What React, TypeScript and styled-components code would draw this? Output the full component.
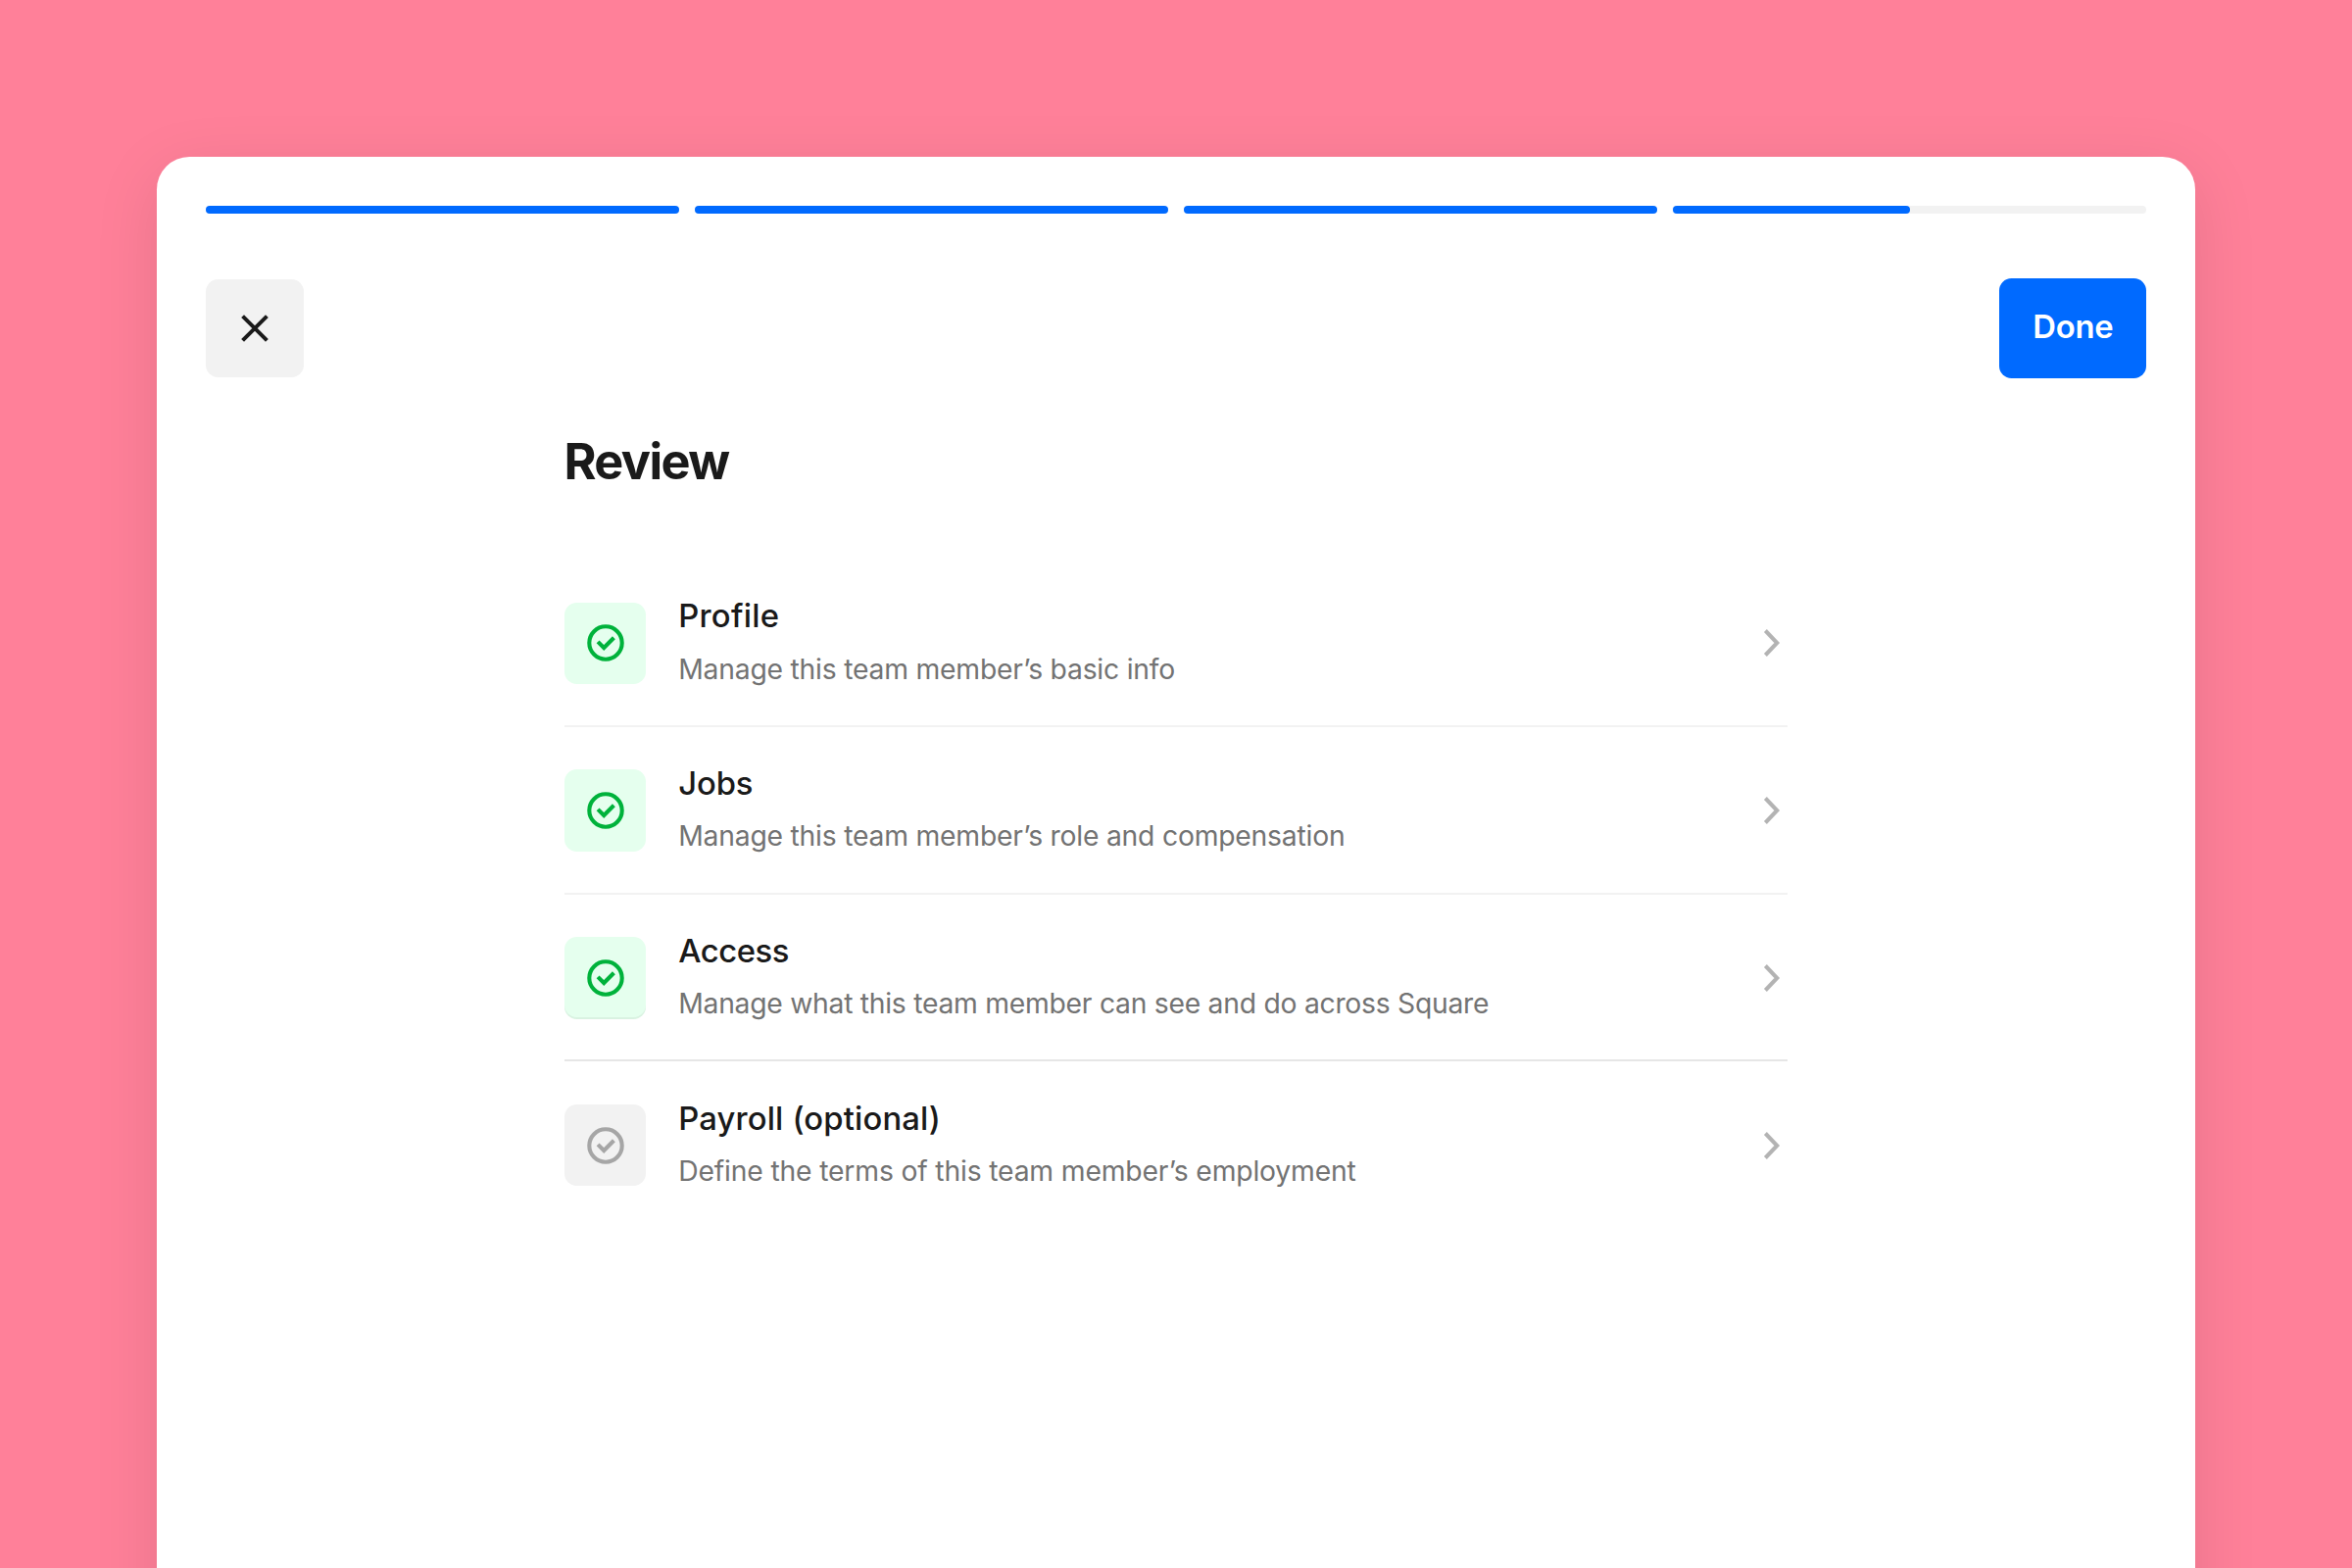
import React from "react";
import styled, { createGlobalStyle } from "styled-components";

const GlobalStyle = createGlobalStyle`
  *, *::before, *::after { box-sizing: border-box; }
  html, body { margin: 0; padding: 0; }
  body {
    background: #ff8099;
    font-family: Inter, "Liberation Sans", sans-serif;
    color: #1a1a1a;
    -webkit-font-smoothing: antialiased;
  }
  button { font: inherit; color: inherit; border: 0; padding: 0; cursor: pointer; }
`;

const Page = styled.div`
  width: 2400px;
  height: 1600px;
  padding: 160px 160px 0;
  overflow: hidden;
  background: #ff8099;
`;

const Sheet = styled.main`
  height: 1600px;
  padding: 50px 50px 0;
  background: #ffffff;
  border-radius: 33.33px;
  box-shadow: 0 16.67px 66.67px rgba(0, 0, 0, 0.1);
`;

const Progress = styled.div`
  display: grid;
  grid-template-columns: repeat(4, 1fr);
  gap: 16.67px;
`;

const Track = styled.div`
  height: 8.33px;
  border-radius: 4.17px;
  background: #f2f2f2;
`;

const Fill = styled.div<{ $amount: number }>`
  width: ${(p) => p.$amount * 100}%;
  height: 100%;
  border-radius: inherit;
  background: #006aff;
`;

const Toolbar = styled.header`
  display: flex;
  align-items: center;
  justify-content: space-between;
  margin-top: 66px;
  height: 102.1px;
`;

const CloseButton = styled.button`
  display: grid;
  place-items: center;
  width: 100px;
  height: 100px;
  border-radius: 12.5px;
  background: #f2f2f2;
`;

const DoneButton = styled.button`
  width: 150.4px;
  height: 102.1px;
  padding: 0 0 3px 1px;
  border-radius: 12.5px;
  background: #006aff;
  color: #ffffff;
  font-size: 32.8px;
  font-weight: 600;
  line-height: 99px;
  letter-spacing: -0.25px;
  text-align: center;
`;

const Content = styled.section`
  width: 1248px;
  margin: 54.3px auto 0;
`;

const Title = styled.h1`
  margin: 0;
  font-size: 50.4px;
  font-weight: 700;
  line-height: 60px;
  letter-spacing: -1.6px;
  text-indent: -0.6px;
`;

const List = styled.ul`
  list-style: none;
  margin: 70.2px 0 0;
  padding: 0;
`;

const Row = styled.li<{ $line?: string }>`
  display: flex;
  align-items: flex-start;
  height: 170.83px;
  padding-top: 43.75px;
  border-bottom: 2px solid ${(p) => p.$line ?? "transparent"};
`;

const StatusTile = styled.div<{ $done: boolean; $edge?: boolean }>`
  display: grid;
  place-items: center;
  flex: none;
  width: 83.33px;
  height: 83.33px;
  border-radius: 12.5px;
  background: ${(p) => (p.$done ? "#e5ffee" : "#f2f2f2")};
  color: ${(p) => (p.$done ? "#00b23b" : "#a6a6a6")};
  box-shadow: ${(p) => (p.$edge ? "inset 0 -2.1px 0 rgba(0, 0, 0, 0.05)" : "none")};
`;

const Copy = styled.div`
  flex: 1;
  margin: -6.4px 0 0 32.9px;
  white-space: nowrap;
`;

const Label = styled.h2<{ $tracking: number }>`
  margin: 0;
  font-size: 32.8px;
  font-weight: 500;
  line-height: 40px;
  letter-spacing: ${(p) => p.$tracking}px;
`;

const Hint = styled.p<{ $tracking: number }>`
  margin: 16.3px 0 0;
  color: #737373;
  font-size: 28.3px;
  line-height: 36px;
  letter-spacing: ${(p) => p.$tracking}px;
`;

const ChevronSlot = styled.div`
  display: flex;
  align-items: center;
  height: 83.33px;
  padding-right: 7px;
`;

const CloseIcon = () => (
  <svg width="30" height="30" viewBox="-15 -15 30 30" fill="none" stroke="#1a1a1a" strokeWidth="4">
    <path d="M-12.4-12.4 12.4 12.4M12.4-12.4-12.4 12.4" />
  </svg>
);

const CheckIcon = () => (
  <svg width="40" height="40" viewBox="-20 -20 40 40" fill="none" stroke="currentColor" strokeWidth="4.1">
    <circle r="16.7" />
    <path d="M-7.9-1.1-1.8 5 8.4-5.3" />
  </svg>
);

const ChevronIcon = () => (
  <svg width="18" height="30" viewBox="0 0 18 30" fill="none" stroke="#b3b3b3" strokeWidth="4">
    <path d="M2.4 2.5 14.3 15 2.4 27.5" />
  </svg>
);

interface Step {
  label: string;
  hint: string;
  done: boolean;
  edge?: boolean;
  line?: string;
  labelTracking: number;
  hintTracking: number;
}

const progress = [1, 1, 1, 0.5];

const steps: Step[] = [
  { label: "Profile", hint: "Manage this team member’s basic info", done: true, line: "#f2f2f2", labelTracking: 0.25, hintTracking: -0.22 },
  { label: "Jobs", hint: "Manage this team member’s role and compensation", done: true, line: "#f2f2f2", labelTracking: -0.1, hintTracking: -0.22 },
  { label: "Access", hint: "Manage what this team member can see and do across Square", done: true, edge: true, line: "#e6e6e6", labelTracking: -0.45, hintTracking: -0.27 },
  { label: "Payroll (optional)", hint: "Define the terms of this team member’s employment", done: false, labelTracking: 0.15, hintTracking: -0.17 },
];

export default function App() {
  return (
    <>
      <GlobalStyle />
      <Page>
        <Sheet>
          <Progress>
            {progress.map((amount, i) => (
              <Track key={i}>
                <Fill $amount={amount} />
              </Track>
            ))}
          </Progress>
          <Toolbar>
            <CloseButton aria-label="Close">
              <CloseIcon />
            </CloseButton>
            <DoneButton>Done</DoneButton>
          </Toolbar>
          <Content>
            <Title>Review</Title>
            <List>
              {steps.map((step) => (
                <Row key={step.label} $line={step.line}>
                  <StatusTile $done={step.done} $edge={step.edge}>
                    <CheckIcon />
                  </StatusTile>
                  <Copy>
                    <Label $tracking={step.labelTracking}>{step.label}</Label>
                    <Hint $tracking={step.hintTracking}>{step.hint}</Hint>
                  </Copy>
                  <ChevronSlot>
                    <ChevronIcon />
                  </ChevronSlot>
                </Row>
              ))}
            </List>
          </Content>
        </Sheet>
      </Page>
    </>
  );
}
